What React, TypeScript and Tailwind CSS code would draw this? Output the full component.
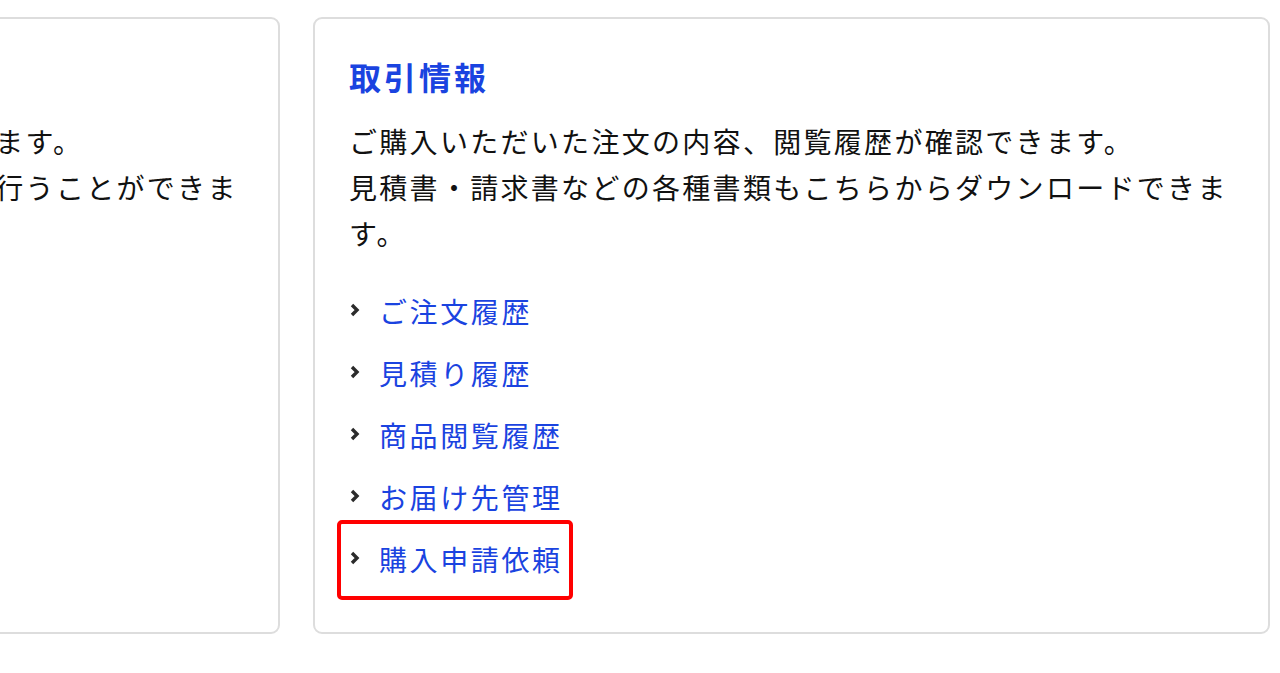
import { ReactNode } from 'react'

type Card = {
  title: string
  lines: ReactNode
  links: string[]
  highlight?: string
}

const cards: Card[] = [
  {
    title: '会員情報',
    lines: (
      <>
        会員登録情報やパスワードの確認・変更ができます。
        <br />
        メールマガジンの配信設定や登録内容の変更を行うことができます。
      </>
    ),
    links: ['会員情報の変更', 'パスワード変更', 'メールマガジン設定'],
  },
  {
    title: '取引情報',
    lines: (
      <>
        ご購入いただいた注文の内容、閲覧履歴が確認できます。
        <br />
        見積書・請求書などの各種書類もこちらからダウンロードできます。
      </>
    ),
    links: ['ご注文履歴', '見積り履歴', '商品閲覧履歴', 'お届け先管理', '購入申請依頼'],
    highlight: '購入申請依頼',
  },
]

function Chevron() {
  return (
    <svg width="12" height="16" viewBox="0 0 12 16" className="shrink-0 text-[#2b2b2b]">
      <polyline points="3,3 8,8 3,13" fill="none" stroke="currentColor" strokeWidth="3.4" strokeLinecap="butt" />
    </svg>
  )
}

export default function App() {
  return (
    <div
      className="min-h-[673px] bg-white text-[#111111] overflow-hidden"
      style={{ fontFamily: '"Noto Sans CJK JP", "Noto Sans", sans-serif' }}
    >
      <div className="flex gap-[33px] pt-[17px] ml-[-677px]">
        {cards.map(card => (
          <section
            key={card.title}
            className="w-[957px] shrink-0 rounded-[9px] border-2 border-[#dddddd] pl-[34px] pr-[34px] pt-[35px] pb-[42px]"
          >
            <h2 className="text-[32px] leading-[44px] font-bold tracking-[3px] text-[#1a43e0]">
              {card.title}
            </h2>
            <p className="mt-[20px] text-[28px] leading-[46px] tracking-[2.3px] font-normal">{card.lines}</p>
            <ul className="mt-[24px]">
              {card.links.map(link => (
                <li key={link} className="relative flex h-[62px] items-center">
                  <span className="w-[30px] -mt-[2px]">
                    <Chevron />
                  </span>
                  <a className="text-[28px] leading-[40px] tracking-[2.6px] font-normal text-[#1a43e0]">{link}</a>
                  {card.highlight === link && (
                    <span className="pointer-events-none absolute left-[-12px] top-[-8px] h-[80px] w-[236px] rounded-[5px] border-4 border-[#ff0000]" />
                  )}
                </li>
              ))}
            </ul>
          </section>
        ))}
      </div>
    </div>
  )
}
